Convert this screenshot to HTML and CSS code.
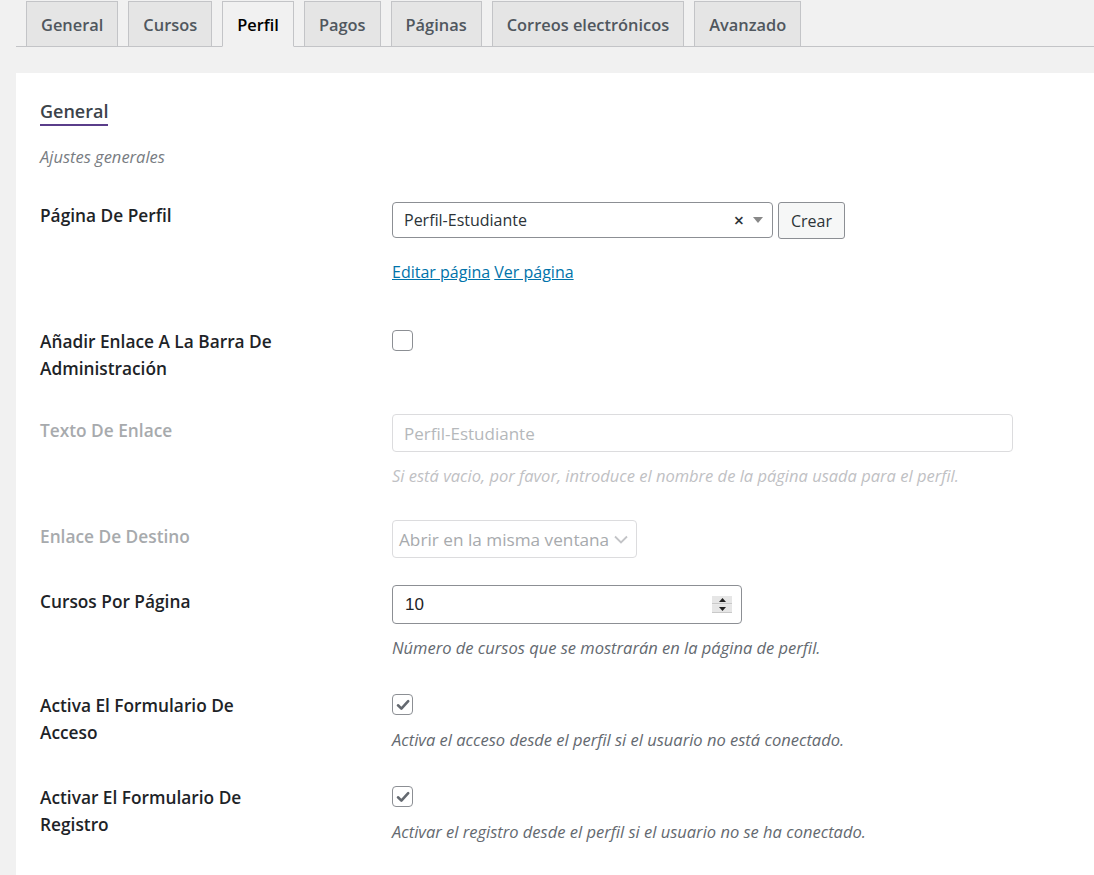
FILE: index.html
```html
<!DOCTYPE html>
<html lang="es">
<head>
<meta charset="utf-8">
<title>Perfil</title>
<link rel="stylesheet" href="styles.css">
</head>
<body>
<nav class="tabs">
  <a class="tab">General</a>
  <a class="tab">Cursos</a>
  <a class="tab tab-active">Perfil</a>
  <a class="tab">Pagos</a>
  <a class="tab">Páginas</a>
  <a class="tab">Correos electrónicos</a>
  <a class="tab">Avanzado</a>
</nav>
<main class="panel">
  <h2 class="section-title"><span>General</span></h2>
  <p class="section-desc">Ajustes generales</p>

  <div class="row row-page">
    <div class="label">Página De Perfil</div>
    <div class="field">
      <div class="inline">
        <div class="select2">
          <span class="select2-text">Perfil-Estudiante</span>
          <span class="select2-clear">×</span>
          <span class="select2-arrow"></span>
        </div>
        <button class="btn">Crear</button>
      </div>
      <div class="links"><a class="link">Editar página</a> <a class="link">Ver página</a></div>
    </div>
  </div>

  <div class="row">
    <div class="label label-narrow">Añadir Enlace A La Barra De Administración</div>
    <div class="field"><span class="checkbox"></span></div>
  </div>

  <div class="row">
    <div class="label label-input label-disabled">Texto De Enlace</div>
    <div class="field">
      <div class="text-input text-input-disabled">Perfil-Estudiante</div>
      <p class="desc desc-disabled">Si está vacio, por favor, introduce el nombre de la página usada para el perfil.</p>
    </div>
  </div>

  <div class="row row-tight">
    <div class="label label-input label-disabled">Enlace De Destino</div>
    <div class="field">
      <div class="plain-select">
        <span>Abrir en la misma ventana</span>
        <svg class="chev" width="14" height="9" viewBox="0 0 14 9"><path d="M1 1.5 L7 7.5 L13 1.5" fill="none" stroke="#c3c4c7" stroke-width="1.8"/></svg>
      </div>
    </div>
  </div>

  <div class="row">
    <div class="label label-input">Cursos Por Página</div>
    <div class="field">
      <div class="number-input">
        <span>10</span>
        <span class="spinner">
          <span class="spin-btn"><svg width="7" height="4" viewBox="0 0 7 4"><path d="M0 4 L3.5 0 L7 4Z" fill="#222"/></svg></span>
          <span class="spin-btn"><svg width="7" height="4" viewBox="0 0 7 4"><path d="M0 0 L3.5 4 L7 0Z" fill="#222"/></svg></span>
        </span>
      </div>
      <p class="desc">Número de cursos que se mostrarán en la página de perfil.</p>
    </div>
  </div>

  <div class="row">
    <div class="label label-narrow">Activa El Formulario De Acceso</div>
    <div class="field">
      <span class="checkbox checkbox-on"><svg width="16" height="16" viewBox="0 0 16 16"><path d="M3 8.3 L6.4 11.6 L13.2 4.2" fill="none" stroke="#646970" stroke-width="2.6" stroke-linecap="round" stroke-linejoin="round"/></svg></span>
      <p class="desc desc-check">Activa el acceso desde el perfil si el usuario no está conectado.</p>
    </div>
  </div>

  <div class="row row-last">
    <div class="label label-narrow">Activar El Formulario De Registro</div>
    <div class="field">
      <span class="checkbox checkbox-on"><svg width="16" height="16" viewBox="0 0 16 16"><path d="M3 8.3 L6.4 11.6 L13.2 4.2" fill="none" stroke="#646970" stroke-width="2.6" stroke-linecap="round" stroke-linejoin="round"/></svg></span>
      <p class="desc desc-check">Activar el registro desde el perfil si el usuario no se ha conectado.</p>
    </div>
  </div>
</main>
</body>
</html>
```
FILE: styles.css
```css
html, body {
  margin: 0;
  padding: 0;
}
body {
  background: #f1f1f1;
  font-family: "Open Sans", "Noto Sans", "Liberation Sans", sans-serif;
  color: #3c434a;
  overflow: hidden;
  height: 875px;
}
.tabs {
  display: flex;
  gap: 10px;
  margin-left: 16px;
  padding-left: 10px;
  padding-top: 1px;
  border-bottom: 1px solid #c3c4c7;
  height: 45px;
}
.tab {
  display: flex;
  align-items: center;
  box-sizing: border-box;
  height: 46px;
  padding: 0 14px;
  margin-bottom: -1px;
  background: #e5e5e5;
  border: 1px solid #c3c4c7;
  font-size: 16.4px;
  font-weight: 600;
  color: #50575e;
}
.tab-active {
  background: #f1f1f1;
  color: #000;
  border-bottom-color: #f1f1f1;
}
.panel {
  box-sizing: border-box;
  background: #fff;
  margin: 26px 0 0 16px;
  padding: 26px 24px 20px 24px;
  height: 802px;
}
.section-title {
  margin: 0;
  font-size: 18px;
  font-weight: 600;
  color: #3c434a;
  line-height: 24px;
}
.section-title span {
  display: inline-block;
  border-bottom: 2px solid #5a3d8a;
  padding-bottom: 1px;
}
.section-desc {
  margin: 21px 0 0 0;
  font-size: 16.5px;
  font-style: italic;
  color: #787c82;
  line-height: 20px;
}
.row {
  display: grid;
  grid-template-columns: 352px 1fr;
  align-items: start;
  margin-bottom: 32px;
}
.row-page {
  margin-top: 35px;
  margin-bottom: 44px;
}
.row-tight {
  margin-bottom: 27px;
}
.row-last {
  margin-bottom: 0;
}
.label {
  font-size: 17.3px;
  font-weight: 600;
  color: #1d2327;
  line-height: 27px;
}
.label-narrow {
  width: 245px;
}
.label-input {
  padding-top: 3px;
}
.label-disabled {
  color: #a7aaad;
}
.field {
  display: flex;
  flex-direction: column;
  align-items: flex-start;
}
.inline {
  display: flex;
  gap: 5px;
  align-items: flex-start;
}
.select2 {
  box-sizing: border-box;
  width: 381px;
  height: 36px;
  border: 1px solid #8c8f94;
  border-radius: 4px;
  display: flex;
  align-items: center;
  padding: 0 9px 0 11px;
  font-size: 16px;
  color: #2c3338;
}
.select2-text {
  flex: 1;
}
.select2-clear {
  font-size: 18px;
  font-weight: 600;
  color: #2c3338;
  margin-right: 9px;
  margin-top: -1px;
}
.select2-arrow {
  width: 0;
  height: 0;
  border-left: 5px solid transparent;
  border-right: 5px solid transparent;
  border-top: 6px solid #888;
}
.btn {
  box-sizing: border-box;
  width: 67px;
  height: 37px;
  background: #f6f7f7;
  border: 1px solid #8c8f94;
  border-radius: 3px;
  font-family: inherit;
  font-size: 16px;
  color: #2c3338;
  padding: 0;
}
.links {
  margin-top: 21px;
  font-size: 16px;
  line-height: 24px;
}
.link {
  color: #0073aa;
  text-decoration: underline;
}
.checkbox {
  box-sizing: border-box;
  width: 21px;
  height: 21px;
  border: 1px solid #8c8f94;
  border-radius: 4px;
  margin-top: 2px;
  display: flex;
  align-items: center;
  justify-content: center;
  background: #fff;
}
.text-input {
  box-sizing: border-box;
  width: 621px;
  height: 38px;
  border: 1px solid #8c8f94;
  border-radius: 4px;
  padding: 0 11px;
  display: flex;
  align-items: center;
  font-size: 17px;
}
.text-input-disabled {
  border-color: #dcdcde;
  color: #b5b8bb;
}
.desc {
  margin: 12px 0 0 0;
  font-size: 16.5px;
  font-style: italic;
  color: #646970;
  line-height: 24px;
}
.desc-disabled {
  color: #bfc1c4;
}
.desc-check {
  margin-top: 13px;
}
.plain-select {
  box-sizing: border-box;
  width: 245px;
  height: 38px;
  border: 1px solid #dcdcde;
  border-radius: 4px;
  padding: 0 8px 0 6px;
  display: flex;
  align-items: center;
  justify-content: space-between;
  font-size: 17.2px;
  color: #a7aaad;
  white-space: nowrap;
  overflow: hidden;
}
.number-input {
  box-sizing: border-box;
  width: 350px;
  height: 39px;
  border: 1px solid #8c8f94;
  border-radius: 4px;
  padding: 0 9px 0 12px;
  display: flex;
  align-items: center;
  justify-content: space-between;
  font-family: "Liberation Sans", Arial, sans-serif;
  font-size: 17px;
  color: #1d2327;
}
.spinner {
  display: flex;
  flex-direction: column;
  width: 20px;
  height: 17px;
  background: #eaeaea;
  gap: 1px;
}
.spin-btn {
  flex: 1;
  display: flex;
  align-items: center;
  justify-content: center;
  background: #e6e6e6;
  border-bottom: 1px solid #c9c9c9;
}
```
